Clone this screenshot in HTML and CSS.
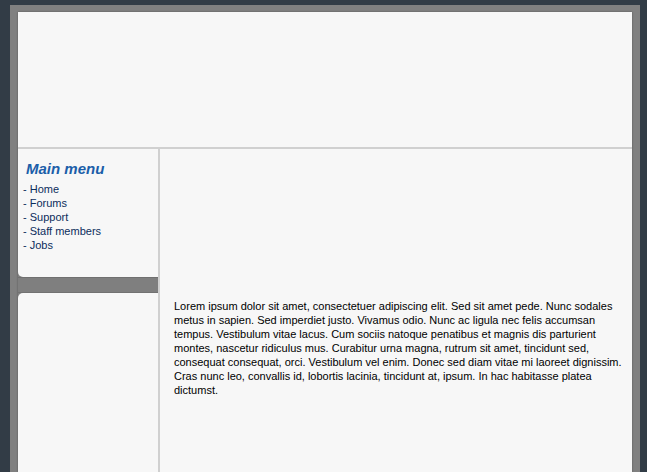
FILE: index.html
```html
<!DOCTYPE html>
<html lang="en">
<head>
  <meta charset="UTF-8" />
  <title>Main menu</title>
  <link rel="stylesheet" href="styles.css">
</head>
<body>
  <div class="frame">
    <div class="inner">
      <div class="header"></div>
      <div class="main">
        <div class="sidebar">
          <div class="box box-top">
            <h3>Main menu</h3>
            <ul class="menu">
              <li><a href="#">- Home</a></li>
              <li><a href="#">- Forums</a></li>
              <li><a href="#">- Support</a></li>
              <li><a href="#">- Staff members</a></li>
              <li><a href="#">- Jobs</a></li>
            </ul>
          </div>
          <div class="gap"></div>
          <div class="box box-bottom"></div>
        </div>
        <div class="content">
          <p>Lorem ipsum dolor sit amet, consectetuer adipiscing elit. Sed sit amet pede. Nunc sodales metus in sapien. Sed imperdiet justo. Vivamus odio. Nunc ac ligula nec felis accumsan tempus. Vestibulum vitae lacus. Cum sociis natoque penatibus et magnis dis parturient montes, nascetur ridiculus mus. Curabitur urna magna, rutrum sit amet, tincidunt sed, consequat consequat, orci. Vestibulum vel enim. Donec sed diam vitae mi laoreet dignissim. Cras nunc leo, convallis id, lobortis lacinia, tincidunt at, ipsum. In hac habitasse platea dictumst.</p>
        </div>
      </div>
    </div>
  </div>
</body>
</html>
```

FILE: styles.css
```css
html, body {
  height: 100%;
}
body {
  margin: 0;
  background: #323c46;
  font-family: "Liberation Sans", Arial, sans-serif;
  font-size: 11px;
  color: #000;
  overflow: hidden;
}
.frame {
  margin: 5px 7px 0 10px;
  padding: 7px 8px 0 8px;
  background: #808080;
  height: calc(100% - 5px);
  box-sizing: border-box;
}
.inner {
  background: #f7f7f7;
  height: 100%;
  box-shadow: 0 0 2px rgba(0,0,0,0.35);
  display: flex;
  flex-direction: column;
}
.header {
  height: 135px;
  flex: none;
  border-bottom: 2px solid #d0d0d0;
}
.main {
  display: flex;
  flex: 1;
}
.sidebar {
  width: 140px;
  border-right: 2px solid #d0d0d0;
  display: flex;
  flex-direction: column;
  background: #808080;
}
.box {
  background: #f7f7f7;
}
.box-top {
  height: 128px;
  padding: 11px 0 0 5px;
  box-sizing: border-box;
  border-bottom-left-radius: 5px;
}
.box-bottom {
  flex: 1;
  border-top-left-radius: 5px;
}
.gap {
  height: 14px;
  border-top: 1px solid #707070;
  border-bottom: 1px solid #727272;
  background: #7f7f7f;
}
h3 {
  margin: 0 0 5px 3px;
  font-size: 15px;
  font-style: italic;
  font-weight: bold;
  color: #1b5ea9;
  line-height: 17px;
}
.menu {
  list-style: none;
  margin: 0;
  padding: 0;
}
.menu li {
  line-height: 14px;
}
.menu a {
  color: #0c2d5c;
  text-decoration: none;
}
.content {
  flex: 1;
  padding: 150px 8px 0 14px;
}
.content p {
  margin: 0;
  line-height: 14px;
}
```
